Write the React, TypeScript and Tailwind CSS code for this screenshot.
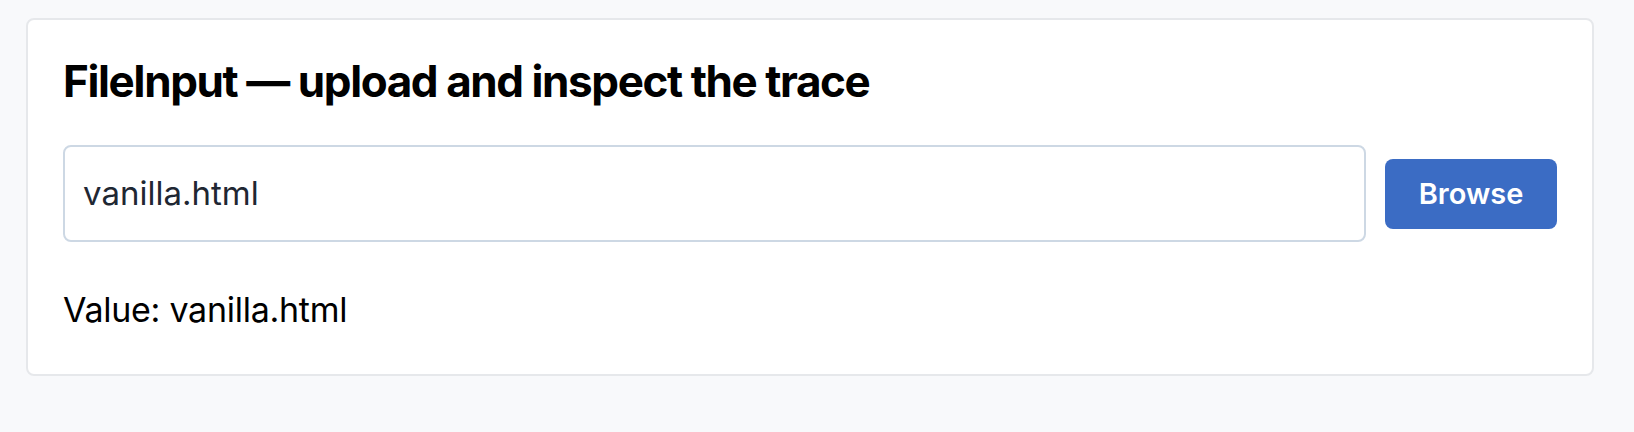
import { useState } from "react";

export default function App() {
  const [value] = useState("vanilla.html");

  return (
    <div className="min-h-[432px] bg-[#f8f9fb] pl-[26px] pr-[40px] pt-[18px] font-['Inter',sans-serif]">
      <div className="rounded-[8px] border-2 border-[#e6e8eb] bg-white px-[35px] pt-[35px] pb-[44px]">
        <h2 className="text-[44px] font-bold leading-[53px] tracking-[-0.032em] text-black">
          FileInput — upload and inspect the trace
        </h2>

        <div className="mt-[37px] flex items-center gap-[19px]">
          <div className="flex h-[97px] flex-1 items-center rounded-[8px] border-2 border-[#cdd8e4] px-[18px] text-[33px] text-[#1f2733]">
            {value}
          </div>
          <button className="h-[70px] w-[172px] rounded-[8px] bg-[#3b6cc4] text-[29px] font-semibold text-white">
            Browse
          </button>
        </div>

        <p className="mt-[47px] text-[34px] leading-[41px] tracking-[-0.008em] text-black">
          Value: {value}
        </p>
      </div>
    </div>
  );
}
